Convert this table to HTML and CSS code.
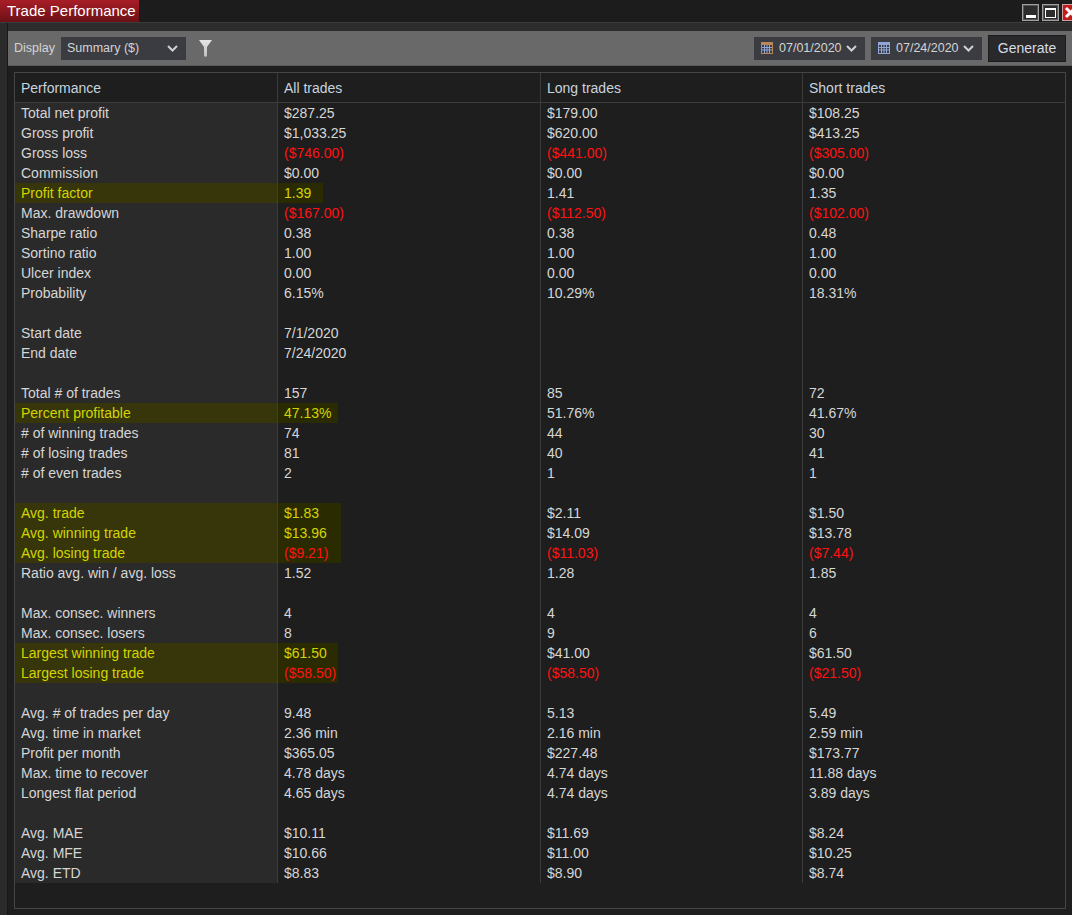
FILE: index.html
```html
<!DOCTYPE html>
<html>
<head>
<meta charset="utf-8">
<link rel="stylesheet" href="styles.css">
</head>
<body>
<div class="window">
  <div class="titlebar">
    <div class="title-tab">Trade Performance</div>
    <div class="winbtns">
      <div class="winbtn"><span class="g-min"></span></div>
      <div class="winbtn"><span class="g-max"></span></div>
      <div class="winbtn close">
        <svg width="13" height="13" viewBox="0 0 13 13"><path d="M2 2 L11 11 M11 2 L2 11" stroke="#fff" stroke-width="3"/></svg>
      </div>
    </div>
  </div>
  <div class="main">
    <div class="edge"></div>
    <div class="body">
      <div class="toolbar">
        <span class="lbl">Display</span>
        <div class="select">
          <span>Summary ($)</span>
          <svg class="chev" width="11" height="7" viewBox="0 0 11 7"><path d="M1 1 L5.5 5.5 L10 1" fill="none" stroke="#d0d0d0" stroke-width="2"/></svg>
        </div>
        <svg class="filter" width="13" height="17" viewBox="0 0 13 17">
          <defs><linearGradient id="fg" x1="0" y1="0" x2="0" y2="1"><stop offset="0" stop-color="#e6e6e6"/><stop offset="1" stop-color="#bdbdbd"/></linearGradient></defs>
          <path d="M0 0 H13 L8 7 V16 L6.5 17 L5 16 V7 Z" fill="url(#fg)"/>
        </svg>
        <div class="spacer"></div>
        <div class="datebox">
          <svg class="cal" width="12" height="12" viewBox="0 0 12 12">
            <rect x="0.5" y="0.5" width="11" height="11" fill="#3b3b42" stroke="#b9885a"/>
            <rect x="0.5" y="0.5" width="11" height="2.5" fill="#b9885a"/>
            <path d="M1 5.5 H11 M1 8 H11 M3.5 3 V11 M6 3 V11 M8.5 3 V11" stroke="#8fa6d6" stroke-width="1"/>
          </svg>
          <span class="date">07/01/2020</span>
          <svg class="chev" width="11" height="7" viewBox="0 0 11 7"><path d="M1 1 L5.5 5.5 L10 1" fill="none" stroke="#d0d0d0" stroke-width="2"/></svg>
        </div>
        <div class="datebox">
          <svg class="cal" width="12" height="12" viewBox="0 0 12 12">
            <rect x="0.5" y="0.5" width="11" height="11" fill="#3b3b42" stroke="#8fa6d6"/>
            <rect x="0.5" y="0.5" width="11" height="2.5" fill="#8fa6d6"/>
            <path d="M1 5.5 H11 M1 8 H11 M3.5 3 V11 M6 3 V11 M8.5 3 V11" stroke="#8fa6d6" stroke-width="1"/>
          </svg>
          <span class="date">07/24/2020</span>
          <svg class="chev" width="11" height="7" viewBox="0 0 11 7"><path d="M1 1 L5.5 5.5 L10 1" fill="none" stroke="#d0d0d0" stroke-width="2"/></svg>
        </div>
        <button class="gen">Generate</button>
      </div>
      <div class="gridwrap">
        <table class="grid">
          <colgroup><col class="c1"><col class="c2"><col class="c3"><col class="c4"></colgroup>
          <thead>
            <tr><th>Performance</th><th>All trades</th><th>Long trades</th><th>Short trades</th></tr>
          </thead>
          <tbody>
            <tr><td>Total net profit</td><td>$287.25</td><td>$179.00</td><td>$108.25</td></tr>
            <tr><td>Gross profit</td><td>$1,033.25</td><td>$620.00</td><td>$413.25</td></tr>
            <tr><td>Gross loss</td><td class="neg">($746.00)</td><td class="neg">($441.00)</td><td class="neg">($305.00)</td></tr>
            <tr><td>Commission</td><td>$0.00</td><td>$0.00</td><td>$0.00</td></tr>
            <tr class="hl"><td>Profit factor</td><td class="hc"><span class="hb w45">1.39</span></td><td>1.41</td><td>1.35</td></tr>
            <tr><td>Max. drawdown</td><td class="neg">($167.00)</td><td class="neg">($112.50)</td><td class="neg">($102.00)</td></tr>
            <tr><td>Sharpe ratio</td><td>0.38</td><td>0.38</td><td>0.48</td></tr>
            <tr><td>Sortino ratio</td><td>1.00</td><td>1.00</td><td>1.00</td></tr>
            <tr><td>Ulcer index</td><td>0.00</td><td>0.00</td><td>0.00</td></tr>
            <tr><td>Probability</td><td>6.15%</td><td>10.29%</td><td>18.31%</td></tr>
            <tr><td></td><td></td><td></td><td></td></tr>
            <tr><td>Start date</td><td>7/1/2020</td><td></td><td></td></tr>
            <tr><td>End date</td><td>7/24/2020</td><td></td><td></td></tr>
            <tr><td></td><td></td><td></td><td></td></tr>
            <tr><td>Total # of trades</td><td>157</td><td>85</td><td>72</td></tr>
            <tr class="hl"><td>Percent profitable</td><td class="hc"><span class="hb w60">47.13%</span></td><td>51.76%</td><td>41.67%</td></tr>
            <tr><td># of winning trades</td><td>74</td><td>44</td><td>30</td></tr>
            <tr><td># of losing trades</td><td>81</td><td>40</td><td>41</td></tr>
            <tr><td># of even trades</td><td>2</td><td>1</td><td>1</td></tr>
            <tr><td></td><td></td><td></td><td></td></tr>
            <tr class="hl"><td>Avg. trade</td><td class="hc"><span class="hb w63">$1.83</span></td><td>$2.11</td><td>$1.50</td></tr>
            <tr class="hl"><td>Avg. winning trade</td><td class="hc"><span class="hb w63">$13.96</span></td><td>$14.09</td><td>$13.78</td></tr>
            <tr class="hl"><td>Avg. losing trade</td><td class="hc"><span class="hb w63 neg">($9.21)</span></td><td class="neg">($11.03)</td><td class="neg">($7.44)</td></tr>
            <tr><td>Ratio avg. win / avg. loss</td><td>1.52</td><td>1.28</td><td>1.85</td></tr>
            <tr><td></td><td></td><td></td><td></td></tr>
            <tr><td>Max. consec. winners</td><td>4</td><td>4</td><td>4</td></tr>
            <tr><td>Max. consec. losers</td><td>8</td><td>9</td><td>6</td></tr>
            <tr class="hl"><td>Largest winning trade</td><td class="hc"><span class="hb w60">$61.50</span></td><td>$41.00</td><td>$61.50</td></tr>
            <tr class="hl"><td>Largest losing trade</td><td class="hc"><span class="hb w60 neg">($58.50)</span></td><td class="neg">($58.50)</td><td class="neg">($21.50)</td></tr>
            <tr><td></td><td></td><td></td><td></td></tr>
            <tr><td>Avg. # of trades per day</td><td>9.48</td><td>5.13</td><td>5.49</td></tr>
            <tr><td>Avg. time in market</td><td>2.36 min</td><td>2.16 min</td><td>2.59 min</td></tr>
            <tr><td>Profit per month</td><td>$365.05</td><td>$227.48</td><td>$173.77</td></tr>
            <tr><td>Max. time to recover</td><td>4.78 days</td><td>4.74 days</td><td>11.88 days</td></tr>
            <tr><td>Longest flat period</td><td>4.65 days</td><td>4.74 days</td><td>3.89 days</td></tr>
            <tr><td></td><td></td><td></td><td></td></tr>
            <tr><td>Avg. MAE</td><td>$10.11</td><td>$11.69</td><td>$8.24</td></tr>
            <tr><td>Avg. MFE</td><td>$10.66</td><td>$11.00</td><td>$10.25</td></tr>
            <tr><td>Avg. ETD</td><td>$8.83</td><td>$8.90</td><td>$8.74</td></tr>
          </tbody>
        </table>
      </div>
    </div>
  </div>
</div>
</body>
</html>
```
FILE: styles.css
```css
* { box-sizing: border-box; }
html, body { margin: 0; padding: 0; }
body {
  background: #1e1e1e;
  font-family: "Liberation Sans", Arial, sans-serif;
  color: #d6d6d6;
}
.window {
  width: 1072px;
  height: 915px;
  display: flex;
  flex-direction: column;
  overflow: hidden;
}
.titlebar {
  height: 23px;
  flex: none;
  display: flex;
  justify-content: space-between;
  background: #1c1c1c;
  border-bottom: 1px solid #3b3b3b;
  overflow: hidden;
}
.title-tab {
  width: 139px;
  height: 22px;
  background: linear-gradient(#a81e27, #6c1016);
  color: #fff;
  font-size: 15px;
  line-height: 22px;
  padding-left: 7px;
  white-space: nowrap;
}
.winbtns {
  display: flex;
  gap: 3px;
  padding-top: 4px;
  margin-right: -7px;
}
.winbtn {
  width: 17px;
  height: 17px;
  border: 1px solid #a0a0a0;
  background: #2c2c2c;
  box-shadow: inset 0 0 0 1px #555;
  display: flex;
  align-items: center;
  justify-content: center;
  position: relative;
}
.g-min {
  width: 10px;
  height: 3px;
  background: #fff;
  margin-top: 7px;
}
.g-max {
  width: 11px;
  height: 10px;
  border: 1px solid #fff;
  border-top-width: 2px;
}
.winbtn.close {
  background: #c01c1c;
  border-color: #d0a0a0;
  box-shadow: none;
}
.main {
  flex: 1;
  display: flex;
  min-height: 0;
}
.edge {
  width: 8px;
  flex: none;
  background: #2b2b2b;
  border-right: 1px solid #181818;
}
.body {
  flex: 1;
  display: flex;
  flex-direction: column;
  background: #1e1e1e;
  min-width: 0;
}
.toolbar {
  flex: none;
  height: 43px;
  border-top: 8px solid #2c2c2c;
  background: #696969;
  display: flex;
  align-items: center;
  padding: 0 6px;
  border-bottom: 1px solid #5a5a5a;
}
.lbl {
  font-size: 12.5px;
  color: #d4d4d4;
}
.select {
  margin-left: 6px;
  width: 125px;
  height: 23px;
  background: #3b3b42;
  display: flex;
  align-items: center;
  justify-content: space-between;
  padding: 0 8px 0 6px;
  font-size: 12.5px;
  color: #d4d4d4;
}
.filter {
  margin-left: 13px;
}
.spacer { flex: 1; }
.datebox {
  width: 111px;
  height: 23px;
  background: #3b3b42;
  display: flex;
  align-items: center;
  padding: 0 8px 0 7px;
  margin-right: 6px;
  font-size: 12.5px;
  color: #d4d4d4;
}
.cal { flex: none; }
.date { margin-left: 6px; flex: 1; }
.gen {
  width: 78px;
  height: 27px;
  background: #29292c;
  border: 1px solid #1c1c1c;
  color: #d6dce4;
  font-family: "Liberation Sans", Arial, sans-serif;
  font-size: 14px;
  padding: 0;
}
.gridwrap {
  flex: 1;
  margin: 6px 6px 6px 6px;
  border: 1px solid #454545;
  background: #1e1e1e;
  min-height: 0;
}
.grid {
  width: 1050px;
  table-layout: fixed;
  border-collapse: separate;
  border-spacing: 0;
  font-size: 14px;
}
.c1 { width: 262px; }
.c2 { width: 263px; }
.c3 { width: 262px; }
.c4 { width: 263px; }
.grid th {
  height: 30px;
  text-align: left;
  font-weight: normal;
  color: #c8d3de;
  padding: 0 6px;
  border-bottom: 1px solid #3c3c3c;
  border-left: 1px solid #3c3c3c;
}
.grid th:first-child { border-left: none; }
.grid td {
  height: 20px;
  line-height: 20px;
  padding: 0 6px;
  border-left: 1px solid #3c3c3c;
  white-space: nowrap;
  overflow: hidden;
}
.grid td:first-child {
  border-left: none;
  background: #2a2a2a;
}
.grid .neg { color: #ff1212; }
.grid tr.hl td:first-child {
  background: #36360a;
  color: #d4d400;
}
.grid td.hc {
  padding: 0;
}
.hb {
  display: block;
  height: 20px;
  padding-left: 6px;
  background: #2b2b02;
  color: #d4d400;
}
.hb.neg { color: #ff1212; }
.w45 { width: 45px; }
.w60 { width: 60px; }
.w63 { width: 63px; }
```
